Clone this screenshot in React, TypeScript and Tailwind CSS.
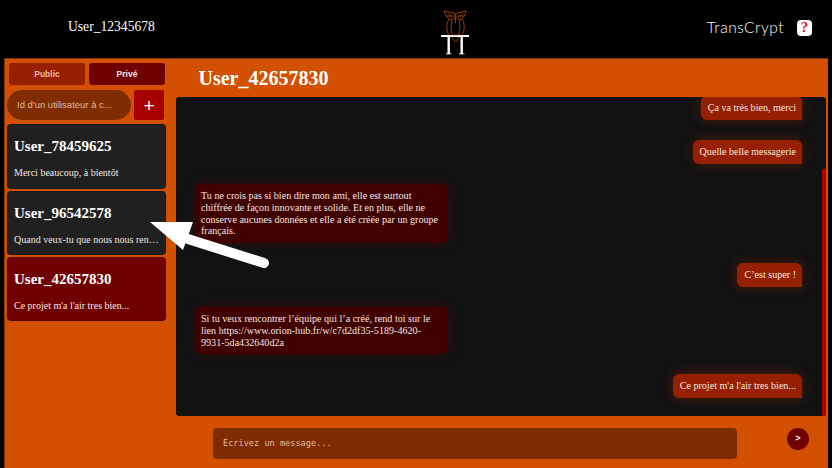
import React from "react";

const serif = "font-['Liberation_Serif','Times_New_Roman',serif]";

function Logo() {
  return (
    <svg width="32" height="50" viewBox="0 0 32 50" fill="none" className="block">
      <g stroke="#a84000" strokeWidth="0.9">
        <path d="M5 5 L16.5 7.5 L27 5 L25.5 10 L21.5 14 L16.5 11.5 L11.5 14 L7 10 Z" />
        <path d="M9 7 L13 11.5 M24 7 L20 11.5 M16.5 7.5 L16.5 17 M7 10 L25.5 10" />
        <path d="M10 13 C7 18 7 24 10 29 M23 13 C26 18 26 24 23 29" />
        <path d="M13 14 C11.5 20 12 25 13.5 29 M20 14 C21.5 20 21 25 19.5 29" />
        <path d="M12 30 L16.5 36 L21 30" />
      </g>
      <g fill="#ffffff">
        <rect x="2" y="29" width="28" height="2" />
        <rect x="8.5" y="30" width="2.4" height="18" />
        <rect x="21.5" y="30" width="2.4" height="18" />
        <rect x="7" y="47.4" width="5.4" height="0.9" />
        <rect x="20" y="47.4" width="5.4" height="0.9" />
      </g>
      <circle cx="15" cy="29" r="0.7" fill="#d35000" />
      <circle cx="18" cy="29" r="0.7" fill="#d35000" />
    </svg>
  );
}

function Card({ name, text, active, h }: { name: string; text: string; active?: boolean; h: string }) {
  return (
    <div className={`${h} rounded-[4px] px-[6px] pt-[10px] border border-black/20 ${active ? "bg-[#700000]" : "bg-[#202020]"}`}>
      <div className="text-[15px] leading-[22px] font-bold text-white">{name}</div>
      <div className="mt-[10px] text-[10px] leading-[12px] text-[#f0e6e0] whitespace-nowrap">{text}</div>
    </div>
  );
}

function Mine({ children }: { children: React.ReactNode }) {
  return (
    <div className="self-end h-[24px] shrink-0 flex items-center rounded-[6px] rounded-br-none bg-[#962000] pl-[7px] pr-[6px] text-[10.1px] leading-[12px] text-[#f5e6e0] shadow-[0_0_12px_rgba(200,50,0,0.35)] whitespace-nowrap">
      {children}
    </div>
  );
}

function Theirs({ children }: { children: React.ReactNode }) {
  return (
    <div className="self-start w-[253px] shrink-0 rounded-[6px] bg-[#400000] px-[6px] py-[6px] text-[10.1px] leading-[11.75px] text-[#f5e6e0] shadow-[0_0_12px_rgba(120,0,0,0.35)]">
      {children}
    </div>
  );
}

export default function App() {
  return (
    <div className={`relative w-[832px] h-[468px] overflow-hidden bg-black flex flex-col ${serif}`}>
      <header className="h-[58px] shrink-0 flex items-center">
        <div className="w-[441px] pl-[68px] pb-[3px] text-[13.6px] text-white">User_12345678</div>
        <div className="w-[32px] -ml-[2px] mt-[3px]">
          <Logo />
        </div>
        <div className="ml-auto flex items-center pr-[20px] pb-[3px]">
          <span className="font-['Lato','DejaVu_Sans',sans-serif] font-light text-[15.5px] text-white tracking-[0.5px]">TransCrypt</span>
          <span className="ml-[13px] w-[15px] h-[16px] rounded-[4px] bg-white flex items-center justify-center text-[15px] font-bold text-[#e01010]">?</span>
        </div>
      </header>

      <main className="flex-1 mx-[4px] min-h-0 flex bg-[#d35000] border-t border-l border-[#8a3400]">
        <aside className="w-[171px] shrink-0 pl-[2px] pr-[10px] pt-[4px] flex flex-col">
          <div className="flex gap-[4px] pl-[2px]">
            <button className="w-[76px] h-[22px] rounded-[3px] bg-[#962000] text-[#f0b8a0] text-[8.5px] font-bold font-['Liberation_Sans',Arial,sans-serif]">Public</button>
            <button className="w-[76px] h-[22px] rounded-[3px] bg-[#700000] text-[#f5e6e0] text-[8.5px] font-bold font-['Liberation_Sans',Arial,sans-serif]">Privé</button>
          </div>
          <div className="flex items-center gap-[3px] mt-[5px]">
            <div className="w-[124px] h-[30px] rounded-full bg-[#7f2d00] pl-[10px] flex items-center text-[9.5px] text-[#e0b8a0] font-['Liberation_Sans',Arial,sans-serif] whitespace-nowrap">Id d'un utilisateur à c...</div>
            <button className="w-[30px] h-[30px] rounded-[2px] bg-[#a80000] text-white text-[19px] leading-none font-normal font-['Liberation_Sans',Arial,sans-serif] flex items-center justify-center">+</button>
          </div>
          <div className="mt-[4px] flex flex-col gap-[2px]">
            <Card h="h-[65px]" name="User_78459625" text="Merci beaucoup, à bientôt" />
            <Card h="h-[64px]" name="User_96542578" text="Quand veux-tu que nous nous ren…" />
            <Card h="h-[64px]" active name="User_42657830" text="Ce projet m'a l'air tres bien..." />
          </div>
        </aside>

        <section className="flex-1 min-w-0 flex flex-col pr-[2px]">
          <div className="h-[38px] shrink-0 pl-[22.5px] flex items-center text-[20px] font-bold text-white">User_42657830</div>
          <div className="relative h-[319px] shrink-0 rounded-[3px] bg-[#121212] overflow-hidden pl-[19px] pr-[24px] flex flex-col gap-[20px]">
            <div className="absolute right-0 top-[72px] bottom-0 w-[4px] bg-[#b00000]" />
            <div className="-mt-px self-end"><Mine>Ça va très bien, merci</Mine></div>
            <Mine>Quelle belle messagerie</Mine>
            <Theirs>Tu ne crois pas si bien dire mon ami, elle est surtout chiffrée de façon innovante et solide. Et en plus, elle ne conserve aucunes données et elle a été créée par un groupe français.</Theirs>
            <Mine>C’est super !</Mine>
            <Theirs>Si tu veux rencontrer l’équipe qui l’a créé, rend toi sur le lien https://www.orion-hub.fr/w/c7d2df35-5189-4620-9931-5da432640d2a</Theirs>
            <Mine>Ce projet m'a l'air tres bien...</Mine>
          </div>
          <div className="flex-1 flex pl-[37px] pt-[12px] items-start">
            <div className="w-[524px] h-[31px] rounded-[4px] bg-[#7f2d00] pl-[10px] flex items-center text-[8.6px] text-[#e0b8a0] font-['DejaVu_Sans_Mono','Liberation_Mono',monospace]">Ecrivez un message...</div>
            <button className="ml-[50px] w-[22px] h-[22px] rounded-full bg-[#700000] text-white text-[9px] font-bold font-['Liberation_Sans',Arial,sans-serif] flex items-center justify-center">&gt;</button>
          </div>
        </section>
      </main>

      <svg className="absolute left-0 top-0 pointer-events-none" width="832" height="468" fill="none">
        <path d="M150 222 L193 222 L183 250 Z" fill="#ffffff" />
        <path d="M172 234 L264 263" stroke="#ffffff" strokeWidth="10" strokeLinecap="round" />
      </svg>
    </div>
  );
}
